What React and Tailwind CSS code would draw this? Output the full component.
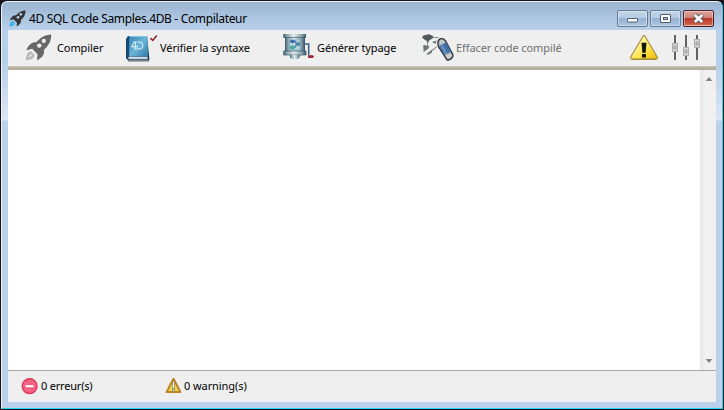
import React from "react";

const font = "font-['Noto_Sans','Open_Sans',sans-serif]";

function Rocket({ className, body, flame, flameLight, hole }) {
  return (
    <svg viewBox="0 0 27 27" className={className}>
      <path d="M26.3 .6C21 .8 17 2.4 13.2 6.2L11.3 8.2C7.5 7.8 3.6 10.4 1.2 16.2L7.2 14.8L12.6 20.3L12 26.2C17.5 23.5 19.6 20.3 18.9 16L21 13.8C24.7 10 26.4 5.2 26.3 .6Z" fill={body} />
      <circle cx="18.8" cy="6.9" r="2.1" fill={hole} />
      <circle cx="14.3" cy="11.6" r="2.2" fill={hole} />
      <path d="M5.4 17.3C2.3 18.2 1.2 21.5 .9 26.3C5.2 26 8.8 24.8 9.5 20.8L8 19.5Z" fill={flame} />
      <path d="M5.3 19.3L3 24L7.7 21.7Z" fill={flameLight} />
    </svg>
  );
}

function Book() {
  return (
    <svg viewBox="0 0 34 29" className="block h-[29px] w-[34px]">
      <defs>
        <linearGradient id="cover" x1="0" y1="0" x2="1" y2="1">
          <stop offset="0" stopColor="#3184b5" />
          <stop offset=".5" stopColor="#6bb5d8" />
          <stop offset="1" stopColor="#2f7aa8" />
        </linearGradient>
      </defs>
      <path d="M3 26.5H24V28H3Z" fill="#a9adb0" />
      <path d="M3 2H22L24.3 24V26.5H3L1 24V5Z" fill="#173f5f" />
      <path d="M3.5 22.8H22.5V25.3H3.5Z" fill="#e7edf0" />
      <path d="M4 24.2H23" stroke="#94a5ad" strokeWidth=".6" />
      <path d="M4 2H22.5L23 22.5H4Z" fill="url(#cover)" />
      <path d="M2 4L4.2 2V22L2 24Z" fill="#164e79" />
      <path d="M4.5 2.5H22" stroke="#8bc7df" strokeWidth="1" />
      <path d="M9.8 7.2L6.8 12.6H13M10.4 7.5V15.5M11.5 8H13.5C19.3 8 19.3 15 13.5 15H9" fill="none" stroke="#d9eef5" strokeWidth="1.1" />
      <path d="M25.4 4.1L27.8 6.4L31.8 1.6" fill="none" stroke="#8d2630" strokeWidth="1.6" />
    </svg>
  );
}

function Machine() {
  return (
    <svg viewBox="0 0 33 29" className="block h-[29px] w-[33px]">
      <defs>
        <linearGradient id="metal">
          <stop offset="0" stopColor="#3d5361" />
          <stop offset=".15" stopColor="#87a2b0" />
          <stop offset=".45" stopColor="#e3eef1" />
          <stop offset=".8" stopColor="#8aa3b0" />
          <stop offset="1" stopColor="#34505e" />
        </linearGradient>
      </defs>
      <path d="M3 4H23V19H3Z" fill="url(#metal)" />
      <path d="M1.3 1H24V4.5H1.3ZM1.3 18H24.3V22H1.3Z" fill="url(#metal)" />
      <path d="M1.3 4.5H24M1.3 18H24.3M1.3 22H24.3" stroke="#3f5966" strokeWidth=".7" />
      <path d="M8 22H18L17.5 24.5L16 26H10L8 24.5Z" fill="url(#metal)" />
      <path d="M7.5 7V17M7.5 7H18V17H7.5" stroke="#7fa6b2" strokeWidth=".8" fill="#bcd9df" />
      <path d="M11 8.5H14V14H11M14 11H16" stroke="#39647c" fill="none" />
      <ellipse cx="10.5" cy="8.5" rx="2.5" ry="1.7" fill="#3d68ad" />
      <circle cx="16.3" cy="11" r="1.9" fill="#4b86a9" />
      <ellipse cx="10.3" cy="14.4" rx="2.6" ry="2.2" fill="#4eaaa5" />
      <path d="M22.5 11H26.7V22.5" fill="none" stroke="#3e6488" strokeWidth="1.6" />
      <ellipse cx="28.8" cy="23.5" rx="3" ry="1.5" fill="#8e2430" />
      <path d="M27.5 23H30" stroke="#d9606a" strokeWidth=".7" />
    </svg>
  );
}

function Eraser() {
  return (
    <svg viewBox="0 0 33 29" className="block h-[29px] w-[33px]">
      <path d="M5.5 5V12M10 4.5H16.5" fill="none" stroke="#888c8e" strokeWidth="1" />
      <path d="M11 16.5L15 13.5M8 19L12.5 16" fill="none" stroke="#a4a8aa" strokeWidth="1.4" />
      <path d="M.4 3.2L3 2L7 1.2L11 3V5L7.5 7.2H3.5L.4 5ZM4 7H7.5L5.8 10Z" fill="#51585b" />
      <path d="M1.2 12L7.3 12.7L6.5 15.5L1.6 19ZM4.5 21L10.8 16L9.5 20L5.5 22ZM10 9L14.5 7.5L13.5 11Z" fill="#6f7476" />
      <path d="M17.2 6.5C18.8 4.8 22 5.8 23.4 7.6L30.8 21.6C31.6 24.5 28.2 27.6 25 26.9L16.5 13.7C15.5 10.8 15.8 8 17.2 6.5Z" fill="#aeb4b7" stroke="#27303b" strokeWidth="1.3" />
      <path d="M17.2 12.7L24.3 9.5L29.2 18.8L22 21.8Z" fill="#416ea5" />
      <path d="M18.3 12.2L20.6 11.3L25.5 20.5L23.2 21.6Z" fill="#658fbd" />
      <path d="M18 7.5L20 7L22.8 9.3L18.3 12Z" fill="#c6cacc" />
      <path d="M23.7 22.8L29 20.3L30 22.5L26 25.8Z" fill="#d0d0d0" />
    </svg>
  );
}

function Warning({ small = false }) {
  return small ? (
    <svg viewBox="0 0 17 17" className="block size-[17px]">
      <path d="M8.5 1.8L15.4 15H1.6Z" fill="#f0d750" stroke="#bd8424" strokeWidth="2" strokeLinejoin="round" />
      <path d="M7 4.8H10V11.8H7ZM7 12H10V14.5H7Z" fill="#8f7f4c" />
      <path d="M7.8 5.2H9.2V11H7.8ZM7.8 12.4H9.2V14H7.8Z" fill="#fff" />
    </svg>
  ) : (
    <svg viewBox="0 0 30 27" className="block h-[27px] w-[30px]">
      <defs>
        <linearGradient id="yellow" x1="0" y1="0" x2="1" y2="1">
          <stop offset=".25" stopColor="#fff3a8" />
          <stop offset=".65" stopColor="#ffe142" />
          <stop offset="1" stopColor="#e9b500" />
        </linearGradient>
      </defs>
      <path d="M14 2.2Q15 .6 16 2.2L28.3 23Q28.8 25 27 25H3Q1.2 25 1.7 23Z" fill="url(#yellow)" stroke="#a6924f" strokeWidth="1.2" />
      <path d="M2.5 25.3H27.5" stroke="#8f7000" strokeWidth=".8" />
      <path d="M12.5 8.8H17.5L16.6 18.8H13.4ZM13 20H17V23.4H13Z" fill="#141507" />
    </svg>
  );
}

function Sliders() {
  return (
    <svg viewBox="0 0 29 27" className="block h-[27px] w-[29px]">
      {[[3, 13.5], [14, 17.5], [25, 9.5]].map(([x, y]) => (
        <g key={x}>
          <path d={`M${x} 1V26`} stroke="#626262" strokeWidth="2" />
          <rect x={x - 2.5} y={y - 4} width="5" height="8" fill="#d9d9d9" stroke="#acacac" />
          <rect x={x - 1} y={y - 1.5} width="2" height="3" fill="#c6c6c6" stroke="#999" strokeWidth=".8" />
        </g>
      ))}
    </svg>
  );
}

function WindowButton({ kind }) {
  const close = kind === "close";
  return (
    <button className={`flex h-[17px] w-[31px] items-center justify-center rounded-[2px] border ${close ? "border-[#531b25] bg-[linear-gradient(#dca39b_0%,#cf8277_46%,#b93b2b_50%,#c9563e_85%,#d88d76_100%)]" : "border-[#657b95] bg-[linear-gradient(#c4d5e8_0%,#b6cbe2_46%,#98b3d1_50%,#a9c5e2_100%)]"} shadow-[inset_0_0_0_1px_rgba(255,255,255,0.4)]`}>
      <svg viewBox="0 0 13 11" className="h-[11px] w-[13px]">
        {kind === "min" && <rect x="1.5" y="5.5" width="10" height="3.5" rx=".5" fill="#fff" stroke="#555c6c" />}
        {kind === "max" && <><rect x="1.5" y="1.5" width="10" height="8" rx=".5" fill="#fff" stroke="#555c6c" /><rect x="4.5" y="4.5" width="4" height="2" fill="#a4bdd8" stroke="#555c6c" /></>}
        {close && <><path d="M2.6 1.8L10.4 9.2M10.4 1.8L2.6 9.2" stroke="#555b69" strokeWidth="4.4" /><path d="M2.8 2L10.2 9M10.2 2L2.8 9" stroke="#fff" strokeWidth="2.6" /></>}
      </svg>
    </button>
  );
}

export default function App() {
  return (
    <div className={`h-[410px] w-[724px] overflow-hidden bg-[#141419] p-px text-black ${font}`}>
      <div className="h-[408px] w-[722px] overflow-hidden rounded-t-[6px] border border-b-[#22d4f2] border-l-[#edf4fb] border-r-[#22d4f2] border-t-[#e8f1fa] bg-[linear-gradient(#9ab4d2_0px,#b9d1ea_28px,#b5cfea_60px,#dce7f5_118px,#b9d1ea_119px)] px-[6px] pb-[6px]">
        <header className="flex h-[28px] items-start">
          <Rocket className="ml-px mt-[8px] size-[17px] shrink-0" body="#343639" flame="#2da7e4" flameLight="#6ccbf8" hole="#b4c9e0" />
          <h1 className="ml-[3px] mt-[8px] whitespace-nowrap text-[12px] leading-[17px] tracking-[-0.34px]">4D SQL Code Samples.4DB - Compilateur</h1>
          <div className="ml-auto mr-[2px] mt-[8px] flex gap-[2px]">
            <WindowButton kind="min" /><WindowButton kind="max" /><WindowButton kind="close" />
          </div>
        </header>
        <main className="flex h-[372px] w-[708px] flex-col bg-[#efefef]">
          <nav className="flex h-[36px] shrink-0 items-start whitespace-nowrap text-[11px] leading-[16px] tracking-[-0.09px]">
            <div className="flex w-[117px] pl-[17px] pt-[4px]">
              <Rocket className="size-[27px] shrink-0" body="#686868" flame="#b5b5b5" flameLight="#e0e0e0" hole="#efefef" />
              <span className="ml-[5px] mt-[6px]">Compiler</span>
            </div>
            <div className="flex w-[157px] pt-[4px]"><Book /><span className="ml-px mt-[6px]">Vérifier la syntaxe</span></div>
            <div className="flex w-[140px] pt-[3px]"><Machine /><span className="ml-[2px] mt-[7px]">Générer typage</span></div>
            <div className="flex pt-[3px] text-[#6f6f6f]"><Eraser /><span className="ml-px mt-[7px]">Effacer code compilé</span></div>
            <div className="ml-auto mr-[15px] mt-[4px] flex gap-[13px]"><Warning /><Sliders /></div>
          </nav>
          <div className="h-[4px] shrink-0 bg-[linear-gradient(#c9c6b8_0_1px,#b9b29b_1px_3px,#acacac_3px)]" />
          <section className="flex h-[300px] shrink-0 bg-white">
            <div className="flex-1" />
            <div className="flex w-[16px] flex-col items-center justify-between border-l border-[#e8e8e8] bg-[linear-gradient(90deg,#e9e9e9,#f2f2f2_5px,#f0f0f0)] py-[7px]">
              <svg viewBox="0 0 8 4" className="h-[4px] w-[8px]"><path d="M4 0L7.5 4H.5Z" fill="#858585" /></svg>
              <svg viewBox="0 0 8 4" className="h-[4px] w-[8px]"><path d="M.5 0H7.5L4 4Z" fill="#858585" /></svg>
            </div>
          </section>
          <footer className="flex h-[32px] shrink-0 border-t border-[#a5a6aa] pl-[13px] text-[11px] leading-[16px] tracking-[-0.2px]">
            <div className="flex w-[144px] pt-[7px]">
              <svg viewBox="0 0 17 17" className="size-[17px]"><circle cx="8.6" cy="8.2" r="7.4" fill="#f66484" stroke="#dc3759" strokeWidth="1.4" /><rect x="4" y="6.7" width="9" height="3" rx=".7" fill="#fff" stroke="#e44869" strokeWidth=".7" /></svg>
              <span className="ml-[3px]">0 erreur(s)</span>
            </div>
            <div className="flex pt-[6px] tracking-[-0.08px]"><Warning small /><span className="ml-[2px] mt-px">0 warning(s)</span></div>
          </footer>
        </main>
      </div>
    </div>
  );
}
